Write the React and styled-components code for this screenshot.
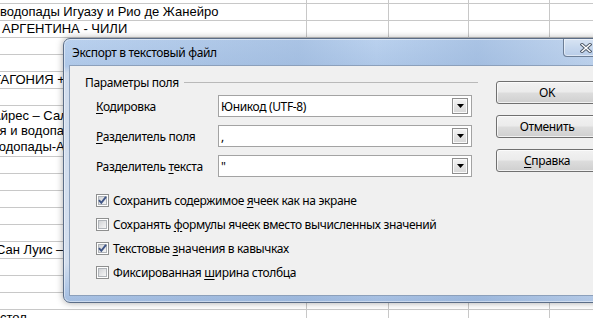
import React from 'react';
import styled, { createGlobalStyle } from 'styled-components';

const Global = createGlobalStyle`
  html, body { margin: 0; padding: 0; background: #fff; }
  body { overflow: hidden; }
  #root { position: relative; width: 593px; height: 318px; overflow: hidden; }
`;

/* ---------- spreadsheet background ---------- */
const Sheet = styled.div`
  display: flex;
  flex-direction: column;
  font-family: "Liberation Sans", Arial, sans-serif;
  font-size: 13px;
  color: #000;
`;

const Row = styled.div`
  box-sizing: border-box;
  height: ${(p) => p.$h}px;
  border-bottom: 1px solid #c8c8c8;
  display: grid;
  grid-template-columns: 306px 82px 80px 81px 81px;
`;

const WideCell = styled.div`
  display: flex;
  flex-direction: column;
  justify-content: center;
  white-space: nowrap;
  line-height: ${(p) => p.$lh || 16}px;
  margin-left: ${(p) => p.$x || 0}px;
  overflow: visible;
`;

const Cell = styled.div`
  border-left: 1px solid #c8c8c8;
`;

const SheetRow = ({ h = 17, x, lh, lines = [] }) => (
  <Row $h={h}>
    <WideCell $x={x} $lh={lh}>
      {lines.map((l, i) => (
        <span key={i}>{l}</span>
      ))}
    </WideCell>
    <Cell />
    <Cell />
    <Cell />
    <Cell />
  </Row>
);

/* ---------- dialog window ---------- */
const Window = styled.div`
  position: absolute;
  left: 63px;
  top: 38px;
  width: 560px;
  height: 265px;
  box-sizing: border-box;
  border: 1px solid #5b6d87;
  border-radius: 7px;
  padding: 0 7px 7px 6px;
  display: flex;
  flex-direction: column;
  background:
    linear-gradient(90deg, rgba(255,255,255,0) 0, rgba(140,170,210,0.35) 42%, rgba(255,255,255,0) 56%, rgba(140,170,210,0.35) 74%, rgba(255,255,255,0.2) 100%),
    linear-gradient(180deg, #bad1ee 0, #afc8e8 27px, #d2dded 34px, #d4dfee 85%, #b0c7e6 95%, #a2bce0 100%);
  box-shadow: 0 0 7px rgba(0, 0, 0, 0.35), inset 0 0 0 1px rgba(255, 255, 255, 0.45);
  font-family: "Noto Sans", "Open Sans", sans-serif;
  font-size: 12px;
  letter-spacing: -0.35px;
  color: #000;
`;

const TitleBar = styled.div`
  height: 27px;
  display: flex;
  align-items: flex-start;
  justify-content: space-between;
`;

const Title = styled.div`
  padding-left: 2px;
  line-height: 28px;
  font-size: 12px;
  color: #000;
`;

const CloseButton = styled.div`
  width: 46px;
  height: 18px;
  box-sizing: border-box;
  margin-right: 6px;
  border: 1px solid #6c7e96;
  border-top: none;
  border-radius: 0 0 4px 4px;
  background: linear-gradient(180deg, #d8e4f3 0, #c7d8ee 50%, #b9cde8 100%);
  box-shadow: inset 0 0 0 1px rgba(255, 255, 255, 0.5);
  display: flex;
  align-items: center;
  justify-content: center;
`;

const Client = styled.div`
  flex: 1;
  background: #f0f0f0;
  box-shadow: 0 0 0 1px #8ca0bb;
  display: flex;
  align-items: flex-start;
`;

const MainColumn = styled.div`
  width: 393px;
  padding: 8px 0 0 15px;
  display: flex;
  flex-direction: column;
`;

const GroupHeader = styled.div`
  height: 16px;
  display: flex;
  align-items: center;
`;

const GroupLine = styled.div`
  flex: 1;
  margin-left: 5px;
  border-top: 1px solid #b9b9b9;
`;

const FormGrid = styled.div`
  margin: 5px 0 0 11px;
  display: grid;
  grid-template-columns: 122px 254px;
  grid-auto-rows: 22px;
  row-gap: 8px;
  align-items: center;
`;

const Key = styled.span`
  text-decoration: underline;
  text-underline-offset: 2px;
`;

const Combo = styled.div`
  height: 22px;
  box-sizing: border-box;
  border: 1px solid #a3a3a3;
  background: #fff;
  display: flex;
  align-items: center;
  padding: 0 3px 0 2px;
`;

const ComboText = styled.span`
  flex: 1;
  white-space: nowrap;
`;

const DropButton = styled.span`
  width: 16px;
  height: 16px;
  box-sizing: border-box;
  border: 1px solid #8f8f8f;
  box-shadow: inset 0 0 0 1px #fbfbfb;
  background: linear-gradient(180deg, #f4f4f4 0, #e6e6e6 50%, #d6d6d6 100%);
  display: flex;
  align-items: center;
  justify-content: center;
`;

const CheckList = styled.div`
  margin: 11px 0 0 11px;
  display: flex;
  flex-direction: column;
`;

const CheckRow = styled.div`
  height: 24px;
  display: flex;
  align-items: center;
  gap: 4px;
  white-space: nowrap;
`;

const ButtonColumn = styled.div`
  margin-left: 18px;
  padding-top: 15px;
  display: flex;
  flex-direction: column;
  gap: 11px;
`;

const Button = styled.div`
  width: 102px;
  height: 23px;
  box-sizing: border-box;
  border: 1px solid #707070;
  border-radius: 3px;
  background: linear-gradient(180deg, #f2f2f2 0, #ebebeb 48%, #dddddd 52%, #cfcfcf 100%);
  box-shadow: inset 0 0 0 1px rgba(255, 255, 255, 0.7);
  display: flex;
  align-items: center;
  justify-content: center;
`;

const Arrow = () => (
  <svg width="7" height="4" viewBox="0 0 7 4">
    <path d="M0 0H7L3.5 4Z" fill="#000" />
  </svg>
);

const CheckBox = ({ checked }) => (
  <svg width="13" height="13" viewBox="0 0 13 13">
    <defs>
      <linearGradient id="cbg" x1="0" y1="0" x2="1" y2="1">
        <stop offset="0" stopColor="#cfd1d4" />
        <stop offset="1" stopColor="#f8f8f8" />
      </linearGradient>
    </defs>
    <rect x="0.5" y="0.5" width="12" height="12" fill="#fff" stroke="#8e8f8f" />
    <rect x="2.5" y="2.5" width="8" height="8" fill="url(#cbg)" stroke="#b0b4b9" />
    {checked && (
      <path d="M3 6.2 L5.3 8.8 L10 2.8" fill="none" stroke="#3f5586" strokeWidth="1.9" />
    )}
  </svg>
);

const CloseGlyph = () => (
  <svg width="12" height="10" viewBox="0 0 12 10">
    <path d="M2 1.5L10 8.5M10 1.5L2 8.5" stroke="#4c5868" strokeWidth="3.2" strokeLinecap="square" />
    <path d="M2 1.5L10 8.5M10 1.5L2 8.5" stroke="#ffffff" strokeWidth="1.4" strokeLinecap="square" />
  </svg>
);

const combos = [
  { label: <><Key>К</Key>одировка</>, value: 'Юникод (UTF-8)' },
  { label: <><Key>Р</Key>азделитель поля</>, value: ',' },
  { label: <>Разделитель <Key>т</Key>екста</>, value: '"' },
];

const checks = [
  { checked: true, text: <>Сохранить содержимое <Key>я</Key>чеек как на экране</> },
  { checked: false, text: <>Сохранять <Key>ф</Key>ормулы ячеек вместо вычисленных значений</> },
  { checked: true, text: <>Текстовые <Key>з</Key>начения в кавычках</> },
  { checked: false, text: <>Фиксированная <Key>ш</Key>ирина столбца</> },
];

const sheetRows = [
  { h: 4 },
  { x: 0, lines: ['водопады Игуазу и Рио де Жанейро'] },
  { x: 2, lines: ['АРГЕНТИНА - ЧИЛИ'] },
  {},
  {},
  { x: -24, lines: ['ПАТАГОНИЯ +'] },
  {},
  { h: 51, x: -8, lh: 15.5, lines: ['Айрес – Сальта', 'ля и водопады', 'водопады-Анды'] },
  {},
  {},
  {},
  {},
  {},
  { x: -4, lines: ['Сан Луис – Мендоса'] },
  {},
  {},
  {},
  { x: 0, lines: ['стол'] },
];

export default function App() {
  return (
    <>
      <Global />
      <Sheet>
        {sheetRows.map((r, i) => (
          <SheetRow key={i} {...r} />
        ))}
      </Sheet>
      <Window>
        <TitleBar>
          <Title>Экспорт в текстовый файл</Title>
          <CloseButton>
            <CloseGlyph />
          </CloseButton>
        </TitleBar>
        <Client>
          <MainColumn>
            <GroupHeader>
              <span>Параметры поля</span>
              <GroupLine />
            </GroupHeader>
            <FormGrid>
              {combos.map((c, i) => (
                <React.Fragment key={i}>
                  <span>{c.label}</span>
                  <Combo>
                    <ComboText>{c.value}</ComboText>
                    <DropButton>
                      <Arrow />
                    </DropButton>
                  </Combo>
                </React.Fragment>
              ))}
            </FormGrid>
            <CheckList>
              {checks.map((c, i) => (
                <CheckRow key={i}>
                  <CheckBox checked={c.checked} />
                  <span>{c.text}</span>
                </CheckRow>
              ))}
            </CheckList>
          </MainColumn>
          <ButtonColumn>
            <Button>OK</Button>
            <Button>Отменить</Button>
            <Button>
              <span>
                <Key>С</Key>правка
              </span>
            </Button>
          </ButtonColumn>
        </Client>
      </Window>
    </>
  );
}
